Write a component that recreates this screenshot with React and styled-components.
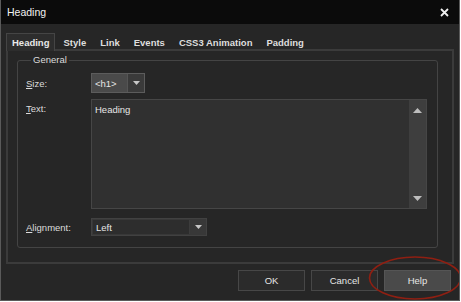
import React from "react";
import styled, { createGlobalStyle } from "styled-components";

const Global = createGlobalStyle`
  html, body { margin: 0; padding: 0; background: #ffffff; }
  body { font-family: "Liberation Sans", Arial, sans-serif; }
  * { box-sizing: border-box; }
`;

const Window = styled.div`
  position: relative;
  width: 460px;
  height: 301px;
  background: #262626;
  border: 1px solid #5a5a5a;
  border-top: none;
  display: flex;
  flex-direction: column;
  overflow: hidden;
`;

const TitleBar = styled.div`
  height: 24px;
  background: #0b0b0b;
  display: flex;
  align-items: center;
  justify-content: space-between;
  padding: 0 10px 0 6px;
  color: #f2f2f2;
  font-size: 10.5px;
`;

const Close = styled.svg`
  width: 9px;
  height: 9px;
`;

const Body = styled.div`
  flex: 1;
  display: flex;
  flex-direction: column;
  padding: 9px 6px 0 5px;
`;

const TabStrip = styled.div`
  display: flex;
  height: 16px;
  align-items: stretch;
`;

const Tab = styled.div`
  padding: 0 ${p => (p.$active ? "5px" : "6px")};
  margin-right: ${p => (p.$active ? "1px" : "0")};
  font-size: 9.5px;
  font-weight: 700;
  color: ${p => (p.$active ? "#e8e8e8" : "#dedede")};
  display: flex;
  align-items: center;
  background: ${p => (p.$active ? "#2d2d2d" : "transparent")};
  border: 1px solid ${p => (p.$active ? "#454545" : "transparent")};
  border-bottom: none;
  position: relative;
  z-index: 1;
  margin-bottom: -2px;
  height: 18px;
`;

const Panel = styled.div`
  width: 448px;
  height: 215px;
  border: 2px solid #3b3b3b;
  padding: 3px 14px 0 9px;
`;

const Group = styled.fieldset`
  margin: 0;
  height: 194px;
  border: 1px solid #444;
  border-radius: 3px;
  padding: 0 0 0 8px;
  display: grid;
  grid-template-columns: 65px 1fr;
  align-content: start;
`;

const Legend = styled.legend`
  font-size: 9.5px;
  color: #dcdcdc;
  padding: 0 2px;
  margin-left: 5px;
  line-height: 12px;
`;

const Label = styled.div`
  font-size: 9.5px;
  color: #dcdcdc;
  height: ${p => p.$h}px;
  margin-top: ${p => p.$mt}px;
  display: flex;
  align-items: ${p => (p.$top ? "flex-start" : "center")};
  padding-top: ${p => (p.$top ? "4px" : "0")};
  u { text-decoration: underline; text-underline-offset: 1px; }
`;

const Combo = styled.div`
  width: ${p => p.$w}px;
  height: ${p => p.$h}px;
  margin-top: ${p => p.$mt}px;
  display: flex;
  border: 1px solid ${p => (p.$light ? "#5c5c5c" : "#414141")};
  background: ${p => (p.$light ? "#3a3a3a" : "#383838")};
`;

const ComboText = styled.div`
  flex: 1;
  display: flex;
  align-items: center;
  padding-left: 3px;
  font-size: 9.5px;
  color: #e6e6e6;
  background: ${p => (p.$light ? "#4a4a4a" : "#2d2d2d")};
  border-right: 1px solid ${p => (p.$light ? "#555" : "#3c3c3c")};
  margin: ${p => (p.$light ? "0" : "1px 0 1px 1px")};
`;

const ComboArrow = styled.div`
  width: 16px;
  display: flex;
  align-items: center;
  justify-content: center;
`;

const TextArea = styled.div`
  width: 336px;
  height: 110px;
  margin-top: 6px;
  background: #303030;
  border: 1px solid #464646;
  display: flex;
`;

const TextContent = styled.div`
  flex: 1;
  font-size: 9.5px;
  color: #e6e6e6;
  padding: 4px 0 0 3px;
`;

const ScrollBar = styled.div`
  width: 17px;
  background: #3e3e3e;
  display: flex;
  flex-direction: column;
  justify-content: space-between;
  align-items: center;
  padding: 8px 0 7px;
`;

const Footer = styled.div`
  display: flex;
  justify-content: flex-end;
  gap: 6px;
  padding: 6px 2px 0 0;
`;

const Button = styled.div`
  width: 67px;
  height: 21px;
  display: flex;
  align-items: center;
  justify-content: center;
  font-size: 9.5px;
  color: #e6e6e6;
  background: ${p => (p.$hl ? "#4a4a4a" : "#2b2b2b")};
  border: 1px solid ${p => (p.$hl ? "#555" : "#474747")};
`;

const Annotation = styled.svg`
  position: absolute;
  left: 367px;
  top: 255px;
  width: 94px;
  height: 46px;
  pointer-events: none;
`;

const Tri = ({ up, c = "#bdbdbd" }) => (
  <svg width="9" height="5" viewBox="0 0 9 5">
    {up ? <path d="M0 5 L4.5 0 L9 5 Z" fill={c} /> : <path d="M0 0 L9 0 L4.5 5 Z" fill={c} />}
  </svg>
);

const SmallTri = () => (
  <svg width="7" height="4" viewBox="0 0 7 4">
    <path d="M0 0 L7 0 L3.5 4 Z" fill="#c8c8c8" />
  </svg>
);

export default function App() {
  return (
    <>
      <Global />
      <Window>
        <TitleBar>
          <span>Heading</span>
          <Close viewBox="0 0 9 9">
            <path d="M1 1 L8 8 M8 1 L1 8" stroke="#f0f0f0" strokeWidth="1.8" />
          </Close>
        </TitleBar>
        <Body>
          <TabStrip>
            <Tab $active>Heading</Tab>
            <Tab>Style</Tab>
            <Tab>Link</Tab>
            <Tab>Events</Tab>
            <Tab>CSS3 Animation</Tab>
            <Tab>Padding</Tab>
          </TabStrip>
          <Panel>
            <Group>
              <Legend>General</Legend>
              <Label $h={20} $mt={7}><span><u>S</u>ize:</span></Label>
              <Combo $light $w={54} $h={20} $mt={7}>
                <ComboText $light>&lt;h1&gt;</ComboText>
                <ComboArrow><SmallTri /></ComboArrow>
              </Combo>
              <Label $h={110} $mt={6} $top><span><u>T</u>ext:</span></Label>
              <TextArea>
                <TextContent>Heading</TextContent>
                <ScrollBar>
                  <Tri up />
                  <Tri />
                </ScrollBar>
              </TextArea>
              <Label $h={18} $mt={9}><span><u>A</u>lignment:</span></Label>
              <Combo $w={116} $h={18} $mt={9}>
                <ComboText>Left</ComboText>
                <ComboArrow><SmallTri /></ComboArrow>
              </Combo>
            </Group>
          </Panel>
          <Footer>
            <Button>OK</Button>
            <Button>Cancel</Button>
            <Button $hl>Help</Button>
          </Footer>
        </Body>
        <Annotation viewBox="0 0 94 46">
          <ellipse cx="47" cy="23" rx="45.5" ry="21" fill="none" stroke="#8f1f12" strokeWidth="1.6" />
        </Annotation>
      </Window>
    </>
  );
}
